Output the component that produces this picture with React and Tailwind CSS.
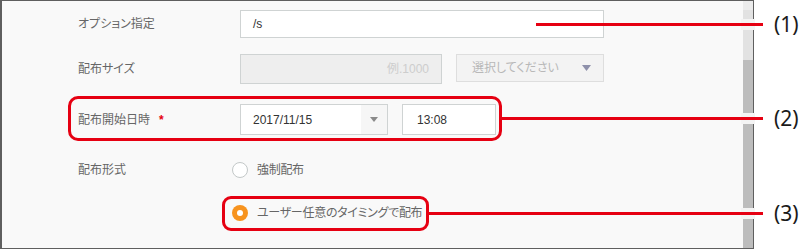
import React from 'react';

const jp = "font-['Liberation_Sans','Noto_Sans_CJK_JP',sans-serif] [font-feature-settings:'palt']";

function Label({ children, required, width = 'w-[238px]' }) {
    return (
        <div className={`${width} shrink-0 pl-[76px] text-[12px] text-[#666] flex items-center`}>
            {children}
            {required && <span className="ml-[9px] text-[#e60012] text-[12px] font-bold">*</span>}
        </div>
    );
}

function Radio({ checked, children }) {
    return (
        <div className="flex items-center gap-[9px]">
            {checked ? (
                <span className="w-[16px] h-[16px] rounded-full bg-[#f7931e] flex items-center justify-center">
                    <span className="w-[6px] h-[6px] rounded-full bg-white" />
                </span>
            ) : (
                <span className="w-[16px] h-[16px] rounded-full border border-[#c3c8c8] bg-white" />
            )}
            <span className="text-[12px] text-[#666] tracking-[-0.3px]">{children}</span>
        </div>
    );
}

function Callout({ n, top }) {
    return (
        <div
            className="absolute left-[774px] h-[26px] leading-[26px] text-[21px] text-[#1a1a1a] font-['Noto_Sans',sans-serif]"
            style={{ top }}
        >
            ({n})
        </div>
    );
}

export default function App() {
    return (
        <div className={`relative w-[806px] h-[250px] bg-white ${jp}`}>
            <div className="w-[754px] h-[249px] border-t border-b border-r border-l-2 border-[#5f5f5f] bg-[#f9f9f9] flex">
                {/* form */}
                <div className="flex-1 flex flex-col">
                    <div className="mt-[9px] h-[28px] flex">
                        <Label>オプション指定</Label>
                        <div className="w-[364px] h-full bg-white border border-[#cfd3d3] flex items-center pl-[12px] text-[12px] text-[#333]">
                            /s
                        </div>
                    </div>

                    <div className="mt-[16px] h-[30px] flex">
                        <Label>配布サイズ</Label>
                        <div className="w-[202px] h-full bg-[#eeeeee] border border-[#cfd3d3] flex items-center justify-end pr-[12px] text-[12px] text-[#cdcdcd]">
                            例.1000
                        </div>
                        <div className="ml-[14px] w-[148px] h-[28px] bg-[#f3f3f3] border border-[#dedede] flex items-center justify-between pl-[15px] pr-[12px] text-[12px] text-[#b8b8b8]">
                            選択してください
                            <svg width="9" height="6" viewBox="0 0 9 6"><path d="M0 0h9L4.5 6z" fill="#8e90aa" /></svg>
                        </div>
                    </div>

                    <div className="mt-[20px] h-[31px] flex">
                        <Label required>配布開始日時</Label>
                        <div className="w-[148px] h-full bg-white border border-[#cfd3d3] flex text-[12px] text-[#333]">
                            <div className="flex-1 flex items-center pl-[12px]">2017/11/15</div>
                            <div className="w-[26px] bg-[#f6f6f6] flex items-center justify-center">
                                <svg width="8" height="5" viewBox="0 0 8 5"><path d="M0 0h8L4 5z" fill="#8a8a8a" /></svg>
                            </div>
                        </div>
                        <div className="ml-[14px] w-[94px] h-full bg-white border border-[#cfd3d3] flex items-center pl-[14px] text-[12px] text-[#333]">
                            13:08
                        </div>
                    </div>

                    <div className="mt-[23px] h-[24px] flex">
                        <Label width="w-[230px]">配布形式</Label>
                        <Radio>強制配布</Radio>
                    </div>

                    <div className="mt-[19px] h-[24px] flex">
                        <div className="w-[230px] shrink-0" />
                        <Radio checked>ユーザー任意のタイミングで配布</Radio>
                    </div>
                </div>

                {/* scrollbar */}
                <div className="w-[10px] flex flex-col">
                    <div className="h-[9px] bg-[#ececec]" />
                    <div className="h-[50px] bg-[#e2e2e2]" />
                    <div className="flex-1 bg-[#bdbdbd]" />
                </div>
            </div>

            {/* annotations */}
            <div className="absolute left-[68px] top-[96px] w-[434px] h-[45px] border-[3px] border-[#e60012] rounded-[10px]" />
            <div className="absolute left-[222px] top-[196px] w-[207px] h-[35px] border-[3px] border-[#e60012] rounded-[9px]" />

            <div className="absolute left-[741px] top-[19px] w-[14px] h-[11px] bg-[#f4f4f4]" />
            <div className="absolute left-[741px] top-[113px] w-[14px] h-[11px] bg-[#f4f4f4]" />
            <div className="absolute left-[741px] top-[208px] w-[14px] h-[11px] bg-[#f4f4f4]" />

            <div className="absolute left-[536px] top-[23px] w-[227px] h-[3px] bg-[#e60012]" />
            <div className="absolute left-[502px] top-[117px] w-[261px] h-[3px] bg-[#e60012]" />
            <div className="absolute left-[429px] top-[212px] w-[334px] h-[3px] bg-[#e60012]" />

            <Callout n={1} top={11} />
            <Callout n={2} top={105} />
            <Callout n={3} top={200} />
        </div>
    );
}
